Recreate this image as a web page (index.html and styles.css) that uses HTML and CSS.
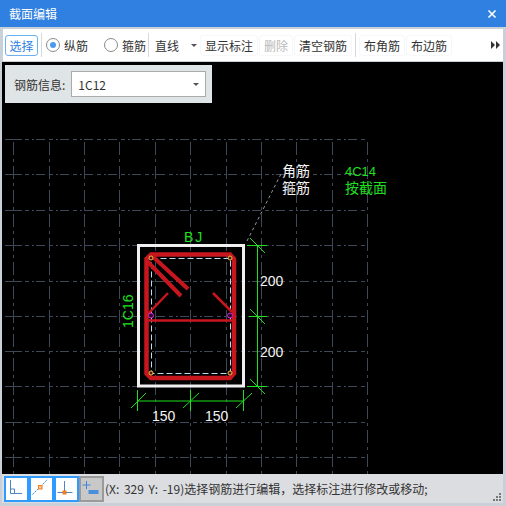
FILE: index.html
```html
<!DOCTYPE html>
<html>
  <head>
    <meta charset="utf-8">
    <title>截面编辑</title>
    <link rel="stylesheet" href="styles.css">
  </head>
  <body>
    <div class="window">
      <div class="titlebar">
        <span class="title">截面编辑</span>
        <svg class="close" width="10" height="10" viewBox="0 0 10 10"><path d="M1.5 1.5L8.5 8.5M8.5 1.5L1.5 8.5" stroke="#fff" stroke-width="1.6"/></svg>
      </div>
      <div class="toolbar">
        <button class="tool select">选择</button>
        <div class="sep"></div>
        <label class="radio on"><i></i>纵筋</label>
        <label class="radio second"><i></i>箍筋</label>
        <div class="sep tight"></div>
        <div class="linetype">直线<span class="caret"></span></div>
        <button class="tool">显示标注</button>
        <button class="tool off">删除</button>
        <button class="tool">清空钢筋</button>
        <div class="sep"></div>
        <button class="tool">布角筋</button>
        <button class="tool">布边筋</button>
        <svg class="more" width="9" height="8" viewBox="0 0 9 8"><path d="M0 0L4 4L0 8ZM5 0L9 4L5 8Z" fill="#333"/></svg>
      </div>
      <div class="canvas">
        <svg class="drawing" width="501" height="412" viewBox="2 62 501 412">
          <path class="grid lead" d="M5 139.5H22M5 174.500H22M5 210.500H22M5 245.500H22M5 281.500H22M5 316.500H22M5 351.500H22M5 386.500H22M5 422.500H22M5 457.500H22"/>
          <path class="grid" d="M25 139.5H368M25 174.500H368M25 210.500H368M25 245.500H368M25 281.500H368M25 316.500H368M25 351.500H368M25 386.500H368M25 422.500H368M25 457.500H368"/>
          <path class="grid vertical" d="M13.500 142V474M49.500 142V474M84.500 142V474M119.500 142V474M155.500 142V474M190.500 142V474M226.500 142V474M261.500 142V474M296.500 142V474M332.500 142V474M367.500 142V474"/>

          <path class="leader" d="M247 241L282 172"/>
          <rect class="outline" x="138.5" y="245.5" width="105" height="140.5"/>
          <rect class="inner" x="151.5" y="258.5" width="79" height="115"/>

          <g class="bars">
            <path class="thick" d="M146.500 262V259L151 254.500H230L234 259V373.500L230 378H151L146.500 373.500V259"/>
            <path class="hook" d="M150 254L188 289M146 260L181 296"/>
            <path class="thin" d="M147 320.500H234M147 315L168 293M232 312L213 293"/>
          </g>

          <g class="corners">
            <circle cx="151" cy="258" r="2"/>
            <circle cx="230" cy="258" r="2"/>
            <circle cx="151" cy="373" r="2"/>
            <circle cx="230" cy="373" r="2"/>
          </g>
          <g class="sides">
            <circle cx="151" cy="315.5" r="2.5"/>
            <circle cx="230" cy="315.5" r="2.5"/>
          </g>

          <path class="dim" d="M247 245.500H267M249 316.500H267M247 386.500H267M257.500 245V387M250 238L265 253M250 309L265 324M250 379L265 394"/>
          <path class="dim" d="M137 401H244M137.500 390V411M190.500 390V411M243.500 390V411M131 408L146 393M183 408L199 393M236 408L252 393"/>

          <text class="white" x="260" y="286">200</text>
          <text class="white" x="260" y="357">200</text>
          <text class="white" x="152" y="421">150</text>
          <text class="white" x="205" y="421">150</text>
          <text class="green spaced" x="184" y="242">BJ</text>
          <text class="green" transform="translate(133 328) rotate(-90)">1C16</text>
          <text class="white cjk" x="282" y="176">角筋</text>
          <text class="white cjk" x="282" y="193">箍筋</text>
          <text class="green narrow" x="345" y="176">4C14</text>
          <text class="green cjk" x="345" y="193">按截面</text>
        </svg>
        <div class="flyout">
          <span>钢筋信息:</span>
          <div class="combo">1C12<span class="caret"></span></div>
        </div>
      </div>
      <div class="statusbar">
        <div class="snap">
          <svg width="21" height="22" viewBox="0 0 21 22"><path d="M4.500 2V15.500H16M4.500 11H8.500V15.500" fill="none" stroke="#4a86c8"/></svg>
        </div>
        <div class="snap">
          <svg width="21" height="22" viewBox="0 0 21 22"><path d="M1.500 16.500L16.500 1.500" fill="none" stroke="#3d86d8" stroke-dasharray="2 1"/><rect x="7.500" y="7.500" width="3.500" height="3.500" fill="#f6c9a0" stroke="#ee7d20"/></svg>
        </div>
        <div class="snap">
          <svg width="21" height="22" viewBox="0 0 21 22"><path d="M8.500 3V15M1.500 14.500H16.500" fill="none" stroke="#4a86c8"/><rect x="6.500" y="12.500" width="4" height="4" fill="#ee7d20"/></svg>
        </div>
        <div class="snap idle">
          <svg width="21" height="22" viewBox="0 0 21 22"><path d="M5.500 3V11M1.500 7H9.500" fill="none" stroke="#3d86d8"/><rect x="7.500" y="12" width="10" height="4" fill="#4a8fdc"/></svg>
        </div>
        <span class="message">(X: 329 Y: -19)选择钢筋进行编辑，选择标注进行修改或移动;</span>
        <svg class="grip" width="8" height="8" viewBox="0 0 8 8"><path d="M6 0h2v2H6zM3 3h2v2H3zM6 3h2v2H6zM0 6h2v2H0zM3 6h2v2H3zM6 6h2v2H6z" fill="#777"/></svg>
      </div>
    </div>
  </body>
</html>
```

FILE: styles.css
```css
/* Reset default styles */
* {
  margin: 0;
  padding: 0;
  box-sizing: border-box;
}

body {
  width: 506px;
  height: 506px;
  overflow: hidden;
  font-family: "Noto Sans CJK SC", "Liberation Sans", sans-serif;
  font-size: 12px;
  color: #333;
  background-color: #c9d0d8;
}

.window {
  display: flex;
  flex-direction: column;
  height: 100%;
}

/* Title bar */
.titlebar {
  display: flex;
  align-items: center;
  justify-content: space-between;
  height: 27px;
  padding: 0 9px;
  background-color: #2f80e0;
  color: #fff;
}

/* Toolbar */
.toolbar {
  display: flex;
  align-items: center;
  gap: 1px;
  height: 32px;
  margin: 2px 3px 1px 3px;
  padding-left: 2px;
  background-color: #fff;
}

.tool {
  height: 21px;
  padding: 0 4px;
  border: 1px solid #f6f7f8;
  border-radius: 3px;
  background-color: #fff;
  font: inherit;
  color: #333;
}

.tool.select {
  width: 33px;
  padding: 0;
  border-color: #6db0f2;
  color: #2f80e0;
}

.tool.off {
  color: #b9b9b9;
}

.sep {
  width: 1px;
  height: 24px;
  margin: 0 2px;
  background-color: #d5d8dc;
}

.sep.tight {
  margin-left: 1px;
}

.radio {
  display: flex;
  align-items: center;
  gap: 4px;
  margin-left: 1px;
}

.radio.second {
  margin-left: 15px;
}

.radio i {
  position: relative;
  width: 14px;
  height: 14px;
  border: 1px solid #8a8a8a;
  border-radius: 50%;
}

.radio.on i::after {
  content: "";
  position: absolute;
  top: 3px;
  left: 3px;
  width: 6px;
  height: 6px;
  border-radius: 50%;
  background-color: #4a9bf0;
}

.linetype {
  display: flex;
  align-items: center;
  justify-content: space-between;
  width: 47px;
  height: 21px;
  padding: 0 2px 0 3px;
}

.caret {
  width: 0;
  height: 0;
  border-left: 3px solid transparent;
  border-right: 3px solid transparent;
  border-top: 3px solid #555;
}

.more {
  margin-left: auto;
  margin-right: 3px;
}

/* Drawing area */
.canvas {
  position: relative;
  height: 412px;
  margin: 0 3px 0 2px;
  background-color: #000;
}

.drawing {
  display: block;
  font-family: "Liberation Sans", "Noto Sans CJK SC", sans-serif;
  font-size: 14px;
}

.grid {
  fill: none;
  stroke: #3e4858;
  stroke-dasharray: 4 3 2 2 9 4;
  shape-rendering: crispEdges;
}

.grid.lead {
  stroke-dasharray: none;
}

.grid.vertical {
  stroke-dasharray: 13 4 3 4;
}

.leader {
  stroke: #999;
  stroke-dasharray: 3 3;
}

.outline {
  fill: none;
  stroke: #f0f0f0;
  stroke-width: 3;
}

.inner {
  fill: none;
  stroke: #bcdcf4;
  stroke-dasharray: 6 3;
}

.thick {
  fill: none;
  stroke: #c8161f;
  stroke-width: 4.5;
}

.hook {
  fill: none;
  stroke: #c8161f;
  stroke-width: 4;
}

.thin {
  fill: none;
  stroke: #c8161f;
  stroke-width: 2.5;
}

.corners circle {
  fill: #551010;
  stroke: #e8c040;
}

.sides circle {
  fill: #2a0a2a;
  stroke: #d824d8;
}

.dim {
  fill: none;
  stroke: #1fe01f;
}

.white {
  fill: #f4f4f4;
}

.green {
  fill: #1fe01f;
}

.spaced {
  letter-spacing: 2px;
}

.narrow {
  font-size: 13px;
}

.cjk {
  font-family: "Noto Sans CJK SC", sans-serif;
  font-size: 14px;
}

.flyout {
  position: absolute;
  top: 3px;
  left: 3px;
  display: flex;
  align-items: center;
  gap: 6px;
  width: 207px;
  height: 38px;
  padding: 0 6px 0 9px;
  background-color: #dfe5e6;
}

.combo {
  display: flex;
  align-items: center;
  justify-content: space-between;
  flex: 1;
  height: 26px;
  padding: 0 6px;
  border: 1px solid #aaa;
  background-color: #fff;
}

/* Status bar */
.statusbar {
  display: flex;
  align-items: center;
  flex: 1;
  position: relative;
  margin: 0 3px 3px 2px;
  padding-left: 2px;
  background-color: #dcdde0;
}

.snap {
  display: flex;
  align-items: center;
  justify-content: center;
  width: 25px;
  height: 26px;
  border: 2px solid #2f9bff;
  background-color: #fff;
}

.snap.idle {
  border-color: #9a9a9a;
  background-color: #c8c8c8;
}

.message {
  margin-left: 1px;
  white-space: nowrap;
  word-spacing: 2px;
}

.grip {
  position: absolute;
  right: 2px;
  bottom: 2px;
}
```
